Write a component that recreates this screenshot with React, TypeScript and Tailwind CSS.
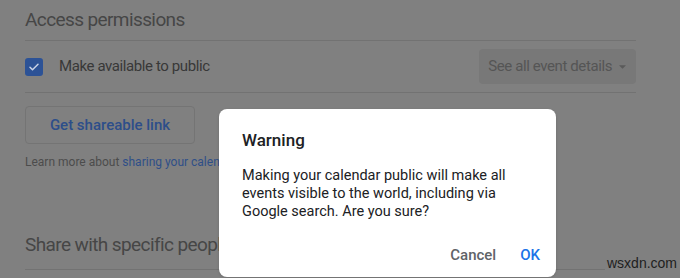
import React from "react";

export default function App() {
  return (
    <div className="relative w-[680px] h-[278px] overflow-hidden bg-[#808080] font-['Roboto',sans-serif]">
      <div className="ml-[25px] w-[611px]">
        <h2 className="pt-[6px] pb-[6px] text-[19px] leading-[28px] tracking-[-0.6px] text-[#464646] border-b border-[#727272]">
          Access permissions
        </h2>
        <div className="flex h-[52px] items-center justify-between border-b border-[#727272]">
          <div className="flex items-center">
            <span className="flex h-[18px] w-[18px] items-center justify-center rounded-[3px] bg-[#2c5296]">
              <svg width="12" height="12" viewBox="0 0 24 24" fill="none">
                <path d="M4 12.5l5 5L20 6.5" stroke="#c9d3e6" strokeWidth="3" strokeLinecap="round" strokeLinejoin="round" />
              </svg>
            </span>
            <span className="ml-[16px] text-[15px] tracking-[-0.4px] text-[#383838]">Make available to public</span>
          </div>
          <div className="flex h-[35px] items-center rounded-[4px] bg-[#787878] pl-[9px] pr-[10px]">
            <span className="text-[15px] tracking-[-0.4px] text-[#555555]">See all event details</span>
            <svg className="ml-[7px]" width="7" height="4" viewBox="0 0 10 5">
              <path d="M0 0l5 5 5-5z" fill="#5a5a5a" />
            </svg>
          </div>
        </div>
        <div className="mt-[13px] flex h-[38px] w-[170px] items-center justify-center rounded-[4px] border border-[#747474] text-[15px] font-medium text-[#2d4e8a]">
          Get shareable link
        </div>
        <p className="mt-[10px] text-[12px] leading-[16px] text-[#4c4c4c]">
          Learn more about <span className="text-[#2f4f88]">sharing your calendar</span>
        </p>
        <h2 className="mt-[61px] pb-[10px] text-[19px] leading-[28px] tracking-[-0.6px] text-[#464646] border-b border-[#727272]">
          Share with specific people
        </h2>
      </div>

      <div className="absolute left-[219px] top-[109px] w-[337px] h-[168px] rounded-[8px] bg-white pl-[23px] pr-[16px] shadow-[0_1px_3px_rgba(0,0,0,0.15)]">
        <h3 className="mt-[20px] text-[17px] leading-[22px] font-medium text-[#202124]">Warning</h3>
        <p className="mt-[16px] text-[14.5px] leading-[18px] text-[#202124]">
          Making your calendar public will make all events visible to the world, including via Google search. Are you sure?
        </p>
        <div className="mt-[23px] flex justify-end gap-[24px]">
          <span className="text-[15px] font-medium text-[#5f6368]">Cancel</span>
          <span className="text-[15px] font-medium text-[#1a73e8]">OK</span>
        </div>
      </div>

      <div className="absolute left-[605px] top-[254px] bg-[#808080] px-[2px] font-['Liberation_Sans',sans-serif] text-[14px] leading-[18px] text-[#1e1e1e]">
        wsxdn.com
      </div>
    </div>
  );
}
